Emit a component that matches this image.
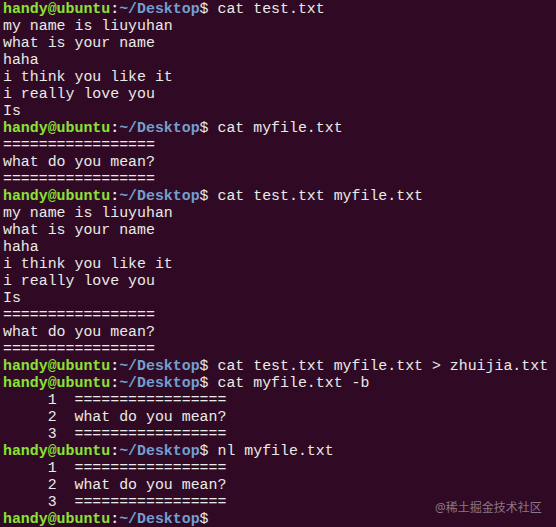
import React from "react";

type Line = { prompt?: boolean; text: string };

const lines: Line[] = [
  { prompt: true, text: " cat test.txt" },
  { text: "my name is liuyuhan" },
  { text: "what is your name" },
  { text: "haha" },
  { text: "i think you like it" },
  { text: "i really love you" },
  { text: "Is" },
  { prompt: true, text: " cat myfile.txt" },
  { text: "=================" },
  { text: "what do you mean?" },
  { text: "=================" },
  { prompt: true, text: " cat test.txt myfile.txt" },
  { text: "my name is liuyuhan" },
  { text: "what is your name" },
  { text: "haha" },
  { text: "i think you like it" },
  { text: "i really love you" },
  { text: "Is" },
  { text: "=================" },
  { text: "what do you mean?" },
  { text: "=================" },
  { prompt: true, text: " cat test.txt myfile.txt > zhuijia.txt" },
  { prompt: true, text: " cat myfile.txt -b" },
  { text: "     1  =================" },
  { text: "     2  what do you mean?" },
  { text: "     3  =================" },
  { prompt: true, text: " nl myfile.txt" },
  { text: "     1  =================" },
  { text: "     2  what do you mean?" },
  { text: "     3  =================" },
  { prompt: true, text: "" },
];

export default function App() {
  return (
    <div className="relative w-[556px] h-[527px] overflow-hidden bg-[#300a24]">
      <div
        className="pl-[3px] pt-[1px] text-[14.9px] leading-[17px] text-[#eaeae8] whitespace-pre"
        style={{ fontFamily: '"Liberation Mono", "DejaVu Sans Mono", monospace' }}
      >
        {lines.map((l, i) => (
          <div key={i} className="h-[17px]">
            {l.prompt && (
              <>
                <span className="font-bold text-[#8ae234]">handy@ubuntu</span>
                <span className="font-bold text-[#eaeae8]">:</span>
                <span className="font-bold text-[#729fcf]">~/Desktop</span>
                <span>$</span>
              </>
            )}
            <span>{l.text}</span>
          </div>
        ))}
      </div>
      <div
        className="absolute left-[435px] top-[500px] text-[12px] leading-[16px] text-[#8a7684]"
        style={{ fontFamily: '"Noto Sans", "Noto Sans CJK SC", sans-serif' }}
      >
        @稀土掘金技术社区
      </div>
    </div>
  );
}
